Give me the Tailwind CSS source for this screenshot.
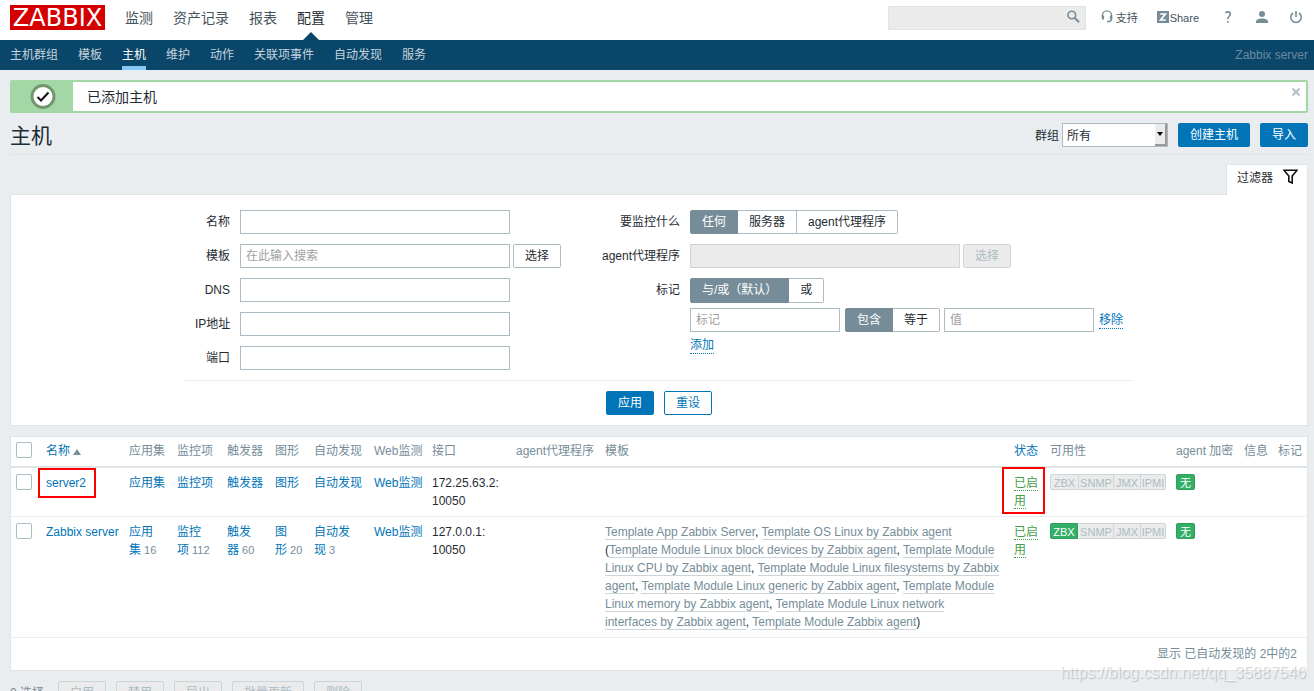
<!DOCTYPE html>
<html lang="zh-CN">
<head>
<meta charset="utf-8">
<title>Zabbix - 主机</title>
<script src="https://cdn.jsdelivr.net/npm/@tailwindcss/browser@4"></script>
</head>
<body class="bg-[#e9edf0]">
<div class="relative flex h-screen flex-col overflow-hidden bg-[#e9edf0] font-['Liberation_Sans','Noto_Sans_CJK_SC',sans-serif] text-xs leading-[18px] text-[#1f2c33]">

  <header class="flex h-10 shrink-0 justify-between bg-white pl-2.5 pr-3">
    <div class="flex">
      <a href="#" class="mt-[5px] flex h-[25px] w-[95px] items-center justify-center bg-[#d40000] font-['DejaVu_Sans',sans-serif] text-2xl leading-none text-white">ZABBIX</a>
      <nav class="ml-5 flex gap-5 text-sm leading-9 text-[#46545c]">
        <a href="#">监测</a>
        <a href="#">资产记录</a>
        <a href="#">报表</a>
        <a href="#" class="relative h-10 text-[#1f2c33]">配置<span class="absolute bottom-0 left-1/2 -translate-x-1/2 border-x-8 border-b-8 border-x-transparent border-b-[#0a466a]"></span></a>
        <a href="#">管理</a>
      </nav>
    </div>
    <div class="flex items-start text-[11px] leading-9 text-[#46545c]">
      <form class="relative mt-1.5">
        <input type="text" aria-label="搜索" class="block h-6 w-[198px] border border-[#dfe4e7] bg-[#ebebeb] pl-1.5 pr-7 text-xs">
        <button type="button" aria-label="搜索" class="absolute right-1.5 top-1"><svg width="13" height="14" viewBox="0 0 13 14" fill="none" stroke="#768d99"><circle cx="4.800" cy="5" r="3.800" stroke-width="1.600"/><path d="M7.600 7.800L12 12.300" stroke-width="2"/></svg></button>
      </form>
      <a href="#" class="ml-[15px] flex gap-[3px]"><svg class="mt-2.5" width="12" height="13" viewBox="0 0 12 13" fill="none" stroke="#768d99"><path d="M1.400 7V5.500a4.600 4.600 0 0 1 9.200 0v3c0 2-1 3-3 3H6" stroke-width="1.400"/><path d="M2 5.500v4M10 5.500v4" stroke-width="2.200"/></svg>支持</a>
      <a href="#" class="ml-[19px] flex gap-px"><svg class="mt-[11px]" width="12" height="12" viewBox="0 0 12 12"><path fill="#768d99" d="M0 0h12v12H0z"/><path d="M3.200 3h5.200L3.600 9h5.200" fill="none" stroke="#fff" stroke-width="1.700"/></svg>Share</a>
      <a href="#" aria-label="帮助" class="ml-[25px] mt-[11px]"><svg width="8" height="13" viewBox="0 0 8 13" fill="none" stroke="#768d99" stroke-width="1.600"><path d="M1.200 1.600C2 1.100 2.800.9 3.700.9c1.500 0 2.600.8 2.600 2.300C6.300 5.200 3.900 5.300 3.900 7.700v.5M3.900 10v1.800"/></svg></a>
      <a href="#" aria-label="用户" class="ml-6 mt-2.5"><svg width="12" height="13" viewBox="0 0 12 13" fill="#768d99"><circle cx="6" cy="4" r="3"/><path d="M0 13v-1.500C0 9.500 3 8.500 6 8.500s6 1 6 3V13z"/></svg></a>
      <a href="#" aria-label="退出" class="ml-[22px] mt-[11px]"><svg width="12" height="13" viewBox="0 0 12 13" fill="none" stroke="#768d99" stroke-width="1.600"><path d="M3 2a5.200 5.200 0 1 0 6 0M6 0v6"/></svg></a>
    </div>
  </header>

  <nav class="flex h-[30px] shrink-0 justify-between bg-[#0a466a] pl-2.5 pr-1.5 leading-[30px] text-[#c5d3dc]">
    <div class="flex gap-5">
      <a href="#">主机群组</a>
      <a href="#">模板</a>
      <a href="#" class="border-b-4 border-[#86c9f4] text-white">主机</a>
      <a href="#">维护</a>
      <a href="#">动作</a>
      <a href="#">关联项事件</a>
      <a href="#">自动发现</a>
      <a href="#">服务</a>
    </div>
    <span class="text-[#6b8a9c]">Zabbix server</span>
  </nav>

  <main class="pl-2.5 pr-1.5 pt-2.5">
    <div class="relative flex h-[33px] items-center rounded-xs border-2 border-[#a3d7a6] bg-white text-sm leading-7">
      <div class="flex h-full w-[61px] items-center justify-center bg-[#a3d7a6]"><svg width="26" height="26" viewBox="0 0 26 26"><circle cx="13" cy="12.500" r="11" fill="#fff" stroke="#73966f" stroke-width="3"/><path d="M7.500 13l3.500 3.500 7.500-8" fill="none" stroke="#111" stroke-width="2"/></svg></div>
      <span class="ml-3.5">已添加主机</span>
      <button type="button" aria-label="关闭" class="absolute right-1.5 top-1.5"><svg width="8" height="8" viewBox="0 0 8 8" stroke="#b5c0c7" stroke-width="2"><path d="M.5.5l7 7M7.500.5l-7 7"/></svg></button>
    </div>

    <div class="flex h-[42px] items-center justify-between border-b border-[#dfe4e7] pt-0.5">
      <h1 class="pt-0.5 text-[21px] leading-7">主机</h1>
      <div class="flex items-center">
        <label for="group" class="mr-[3px] pt-0.5">群组</label>
        <span class="relative mr-2.5">
          <select id="group" class="block h-6 w-[106px] appearance-none border border-[#acbbc2] bg-white pl-1 pt-0.5 text-xs"><option>所有</option></select>
          <span class="pointer-events-none absolute bottom-px right-px top-px flex w-3 items-center justify-center border-b-2 border-r-2 border-[#999] bg-[#ebebeb]"><span class="border-x-3 border-t-4 border-x-transparent border-t-black"></span></span>
        </span>
        <button class="mr-2.5 h-6 rounded-xs bg-[#0275b8] px-3 text-white">创建主机</button>
        <button class="h-6 rounded-xs bg-[#0275b8] px-3 text-white">导入</button>
      </div>
    </div>

    <div class="mt-[9px] flex justify-end">
      <a href="#" class="relative -mb-px flex h-[31px] items-start gap-2.5 rounded-t-xs border border-b-0 border-[#dfe4e7] bg-white pl-2.5 pr-[9px] pt-1">过滤器<svg width="15" height="15" viewBox="0 0 15 15" fill="none" stroke="#111" stroke-width="1.600"><path d="M1 1.200h13L9.200 7v7l-3.400-1.600V7z"/></svg></a>
    </div>

    <form class="flex flex-col items-center border border-[#dfe4e7] bg-white pt-[15px] pb-2.5">
      <div class="flex gap-10 border-b border-[#e9edf0] px-2.5 pb-2.5">
        <div class="grid auto-rows-[24px] grid-cols-[35px_auto] items-center gap-x-2.5 gap-y-2.5">
          <label for="f1" class="text-right">名称</label><input id="f1" class="h-6 w-[270px] border border-[#acbbc2] px-[5px]">
          <label for="f2" class="text-right">模板</label>
          <div class="flex gap-[3px]"><input id="f2" placeholder="在此输入搜索" class="h-6 w-[270px] border border-[#acbbc2] px-[5px] placeholder:text-[#a0a0a0]"><button type="button" class="h-6 w-12 rounded-xs border border-[#acbbc2] leading-[22px]">选择</button></div>
          <label for="f3" class="text-right">DNS</label><input id="f3" class="h-6 w-[270px] border border-[#acbbc2] px-[5px]">
          <label for="f4" class="whitespace-nowrap text-right">IP地址</label><input id="f4" class="h-6 w-[270px] border border-[#acbbc2] px-[5px]">
          <label for="f5" class="text-right">端口</label><input id="f5" class="h-6 w-[270px] border border-[#acbbc2] px-[5px]">
        </div>
        <div class="grid grid-cols-[79px_433px] content-start items-start gap-2.5 leading-6">
          <span class="text-right">要监控什么</span>
          <div class="flex text-center leading-[22px]">
            <label class="w-12 rounded-l-xs border border-[#768d99] bg-[#768d99] text-white"><input type="radio" name="mon" checked class="sr-only">任何</label>
            <label class="border-y border-r border-[#acbbc2] px-[11px]"><input type="radio" name="mon" class="sr-only">服务器</label>
            <label class="rounded-r-xs border-y border-r border-[#acbbc2] px-[11px]"><input type="radio" name="mon" class="sr-only">agent代理程序</label>
          </div>
          <label for="f6" class="whitespace-nowrap text-right">agent代理程序</label>
          <div class="flex gap-[3px]"><input id="f6" disabled class="h-6 w-[270px] border border-[#ccd5d9] bg-[#ebebeb]"><button type="button" disabled class="h-6 w-12 rounded-xs border border-[#ccd5d9] bg-[#ebebeb] leading-[22px] text-[#acbbc2]">选择</button></div>
          <span class="text-right">标记</span>
          <div>
            <div class="flex leading-[23px]">
              <label class="rounded-l-xs border border-[#768d99] bg-[#768d99] px-[11px] text-white"><input type="radio" name="op" checked class="sr-only">与/或（默认）</label>
              <label class="rounded-r-xs border-y border-r border-[#acbbc2] px-[11px]"><input type="radio" name="op" class="sr-only">或</label>
            </div>
            <div class="mt-[5px] flex items-start gap-[5px] leading-[22px]">
              <input aria-label="标记" placeholder="标记" class="h-6 w-[150px] border border-[#acbbc2] px-[5px] placeholder:text-[#a0a0a0]">
              <div class="-mr-px flex text-center">
                <label class="w-12 rounded-l-xs border border-[#768d99] bg-[#768d99] text-white"><input type="radio" name="tag" checked class="sr-only">包含</label>
                <label class="w-[47px] rounded-r-xs border-y border-r border-[#acbbc2]"><input type="radio" name="tag" class="sr-only">等于</label>
              </div>
              <input aria-label="值" placeholder="值" class="h-6 w-[150px] border border-[#acbbc2] px-[5px] placeholder:text-[#a0a0a0]">
              <button type="button" class="mt-[5px] border-b border-dotted border-[#0275b8] leading-[15px] text-[#0275b8]">移除</button>
            </div>
            <button type="button" class="mt-1.5 block border-b border-dotted border-[#0275b8] leading-[15px] text-[#0275b8]">添加</button>
          </div>
        </div>
      </div>
      <div class="mt-2.5 flex gap-2.5">
        <button type="button" class="h-6 w-12 rounded-xs bg-[#0275b8] text-white">应用</button>
        <button type="button" class="h-6 w-12 rounded-xs border border-[#0275b8] leading-[22px] text-[#0275b8]">重设</button>
      </div>
    </form>

    <div class="mt-2.5 border border-[#dfe4e7] bg-white">
      <table class="w-full table-fixed border-separate border-spacing-0 text-left [&_td]:border-b [&_td]:border-[#e9edf0] [&_td]:px-[5px] [&_td]:py-1.5 [&_td]:align-top [&_th]:whitespace-nowrap [&_th]:border-b-2 [&_th]:border-[#dfe4e7] [&_th]:px-[5px] [&_th]:pb-[5px] [&_th]:pt-[5px] [&_th]:align-top [&_th]:font-normal [&_th]:leading-[19px]">
        <colgroup><col class="w-[30px]"><col class="w-[83px]"><col class="w-[48px]"><col class="w-[50px]"><col class="w-[48px]"><col class="w-[39px]"><col class="w-[60px]"><col class="w-[58px]"><col class="w-[84px]"><col class="w-[89px]"><col><col class="w-[36px]"><col class="w-[126px]"><col class="w-[68px]"><col class="w-[34px]"><col class="w-[34px]"></colgroup>
        <thead class="text-[#768d99]">
          <tr>
            <th><input type="checkbox" aria-label="全选" class="block size-4 appearance-none rounded-xs border border-[#acbbc2] bg-white"></th>
            <th><a href="#" class="text-[#0275b8]">名称 <span class="inline-block border-x-4 border-b-6 border-x-transparent border-b-[#768d99]"></span></a></th>
            <th>应用集</th><th>监控项</th><th>触发器</th><th>图形</th><th>自动发现</th><th>Web监测</th><th>接口</th><th>agent代理程序</th><th>模板</th>
            <th><a href="#" class="text-[#0275b8]">状态</a></th><th>可用性</th><th>agent 加密</th><th>信息</th><th>标记</th>
          </tr>
        </thead>
        <tbody>
          <tr>
            <td><input type="checkbox" aria-label="server2" class="block size-4 appearance-none rounded-xs border border-[#acbbc2] bg-white"></td>
            <td class="relative"><a href="#" class="text-[#0275b8]">server2</a><span class="absolute -left-[3px] top-0 h-[30px] w-[58px] border-2 border-[#f00]"></span></td>
            <td><a href="#" class="text-[#0275b8]">应用集</a></td>
            <td><a href="#" class="text-[#0275b8]">监控项</a></td>
            <td><a href="#" class="text-[#0275b8]">触发器</a></td>
            <td><a href="#" class="text-[#0275b8]">图形</a></td>
            <td><a href="#" class="text-[#0275b8]">自动发现</a></td>
            <td class="whitespace-nowrap"><a href="#" class="text-[#0275b8]">Web监测</a></td>
            <td>172.25.63.2:<br>10050</td>
            <td></td><td></td>
            <td class="relative"><a href="#" class="border-b border-dotted border-[#429e47] text-[#429e47]">已启用</a><span class="absolute -left-[7px] -top-px h-[47px] w-[43px] border-2 border-[#f00]"></span></td>
            <td><div class="inline-flex h-4 divide-x divide-[#ccd5d9] rounded-xs border border-[#ccd5d9] bg-[#ebebeb] text-[11px] leading-4 text-[#acbbc2]"><span class="w-7 text-center">ZBX</span><span class="w-[35px] text-center">SNMP</span><span class="w-[27px] text-center">JMX</span><span class="w-6 text-center">IPMI</span></div></td>
            <td><span class="block h-4 w-[19px] rounded-xs border border-[#2f9f5e] bg-[#34af67] text-center text-[11px] leading-4 text-white">无</span></td>
            <td></td><td></td>
          </tr>
          <tr>
            <td><input type="checkbox" aria-label="Zabbix server" class="block size-4 appearance-none rounded-xs border border-[#acbbc2] bg-white"></td>
            <td class="whitespace-nowrap"><a href="#" class="text-[#0275b8]">Zabbix server</a></td>
            <td class="whitespace-nowrap text-[11px] text-[#768d99]"><a href="#" class="text-xs leading-[18px] text-[#0275b8]">应用<br>集</a> 16</td>
            <td class="whitespace-nowrap text-[11px] text-[#768d99]"><a href="#" class="text-xs leading-[18px] text-[#0275b8]">监控<br>项</a> 112</td>
            <td class="whitespace-nowrap text-[11px] text-[#768d99]"><a href="#" class="text-xs leading-[18px] text-[#0275b8]">触发<br>器</a> 60</td>
            <td class="whitespace-nowrap text-[11px] text-[#768d99]"><a href="#" class="text-xs leading-[18px] text-[#0275b8]">图<br>形</a> 20</td>
            <td class="whitespace-nowrap text-[11px] text-[#768d99]"><a href="#" class="text-xs leading-[18px] text-[#0275b8]">自动发<br>现</a> 3</td>
            <td class="whitespace-nowrap"><a href="#" class="text-[#0275b8]">Web监测</a></td>
            <td>127.0.0.1:<br>10050</td>
            <td></td>
            <td class="[&_a]:border-b [&_a]:border-[#ccd5d9] [&_a]:text-[#768d99]"><a href="#">Template App Zabbix Server</a>, <a href="#">Template OS Linux by Zabbix agent</a> (<a href="#">Template Module Linux block devices by Zabbix agent</a>, <a href="#">Template Module Linux CPU by Zabbix agent</a>, <a href="#">Template Module Linux filesystems by Zabbix agent</a>, <a href="#">Template Module Linux generic by Zabbix agent</a>, <a href="#">Template Module Linux memory by Zabbix agent</a>, <a href="#">Template Module Linux network <span class="whitespace-nowrap">interfaces by</span> Zabbix agent</a>, <a href="#">Template Module Zabbix agent</a>)</td>
            <td><a href="#" class="border-b border-dotted border-[#429e47] text-[#429e47]">已启用</a></td>
            <td><div class="inline-flex h-4 divide-x divide-[#ccd5d9] rounded-xs border border-[#ccd5d9] bg-[#ebebeb] text-[11px] leading-4 text-[#acbbc2]"><span class="-my-px -ml-px mr-px w-7 rounded-l-xs border border-[#2f9f5e] bg-[#34af67] text-center text-white">ZBX</span><span class="w-[35px] text-center">SNMP</span><span class="w-[27px] text-center">JMX</span><span class="w-6 text-center">IPMI</span></div></td>
            <td><span class="block h-4 w-[19px] rounded-xs border border-[#2f9f5e] bg-[#34af67] text-center text-[11px] leading-4 text-white">无</span></td>
            <td></td><td></td>
          </tr>
        </tbody>
      </table>
      <div class="px-2.5 py-[7px] text-right text-[#768d99]">显示 已自动发现的 2中的2</div>
    </div>

    <div class="mt-2.5 flex items-center gap-2.5 text-[#768d99]">
      <span class="mr-1">0 选择</span>
      <button disabled class="h-6 rounded-xs border border-[#ccd5d9] bg-[#ebebeb] px-[11px] leading-[22px] text-[#acbbc2]">启用</button>
      <button disabled class="h-6 rounded-xs border border-[#ccd5d9] bg-[#ebebeb] px-[11px] leading-[22px] text-[#acbbc2]">禁用</button>
      <button disabled class="h-6 rounded-xs border border-[#ccd5d9] bg-[#ebebeb] px-[11px] leading-[22px] text-[#acbbc2]">导出</button>
      <button disabled class="h-6 rounded-xs border border-[#ccd5d9] bg-[#ebebeb] px-[11px] leading-[22px] text-[#acbbc2]">批量更新</button>
      <button disabled class="h-6 rounded-xs border border-[#ccd5d9] bg-[#ebebeb] px-[11px] leading-[22px] text-[#acbbc2]">删除</button>
    </div>
  </main>
  <div class="absolute bottom-2 right-2 text-base leading-5 text-white/60 [text-shadow:1px_1px_1px_#0003]">https://blog.csdn.net/qq_35887546</div>
</div>
</body>
</html>
